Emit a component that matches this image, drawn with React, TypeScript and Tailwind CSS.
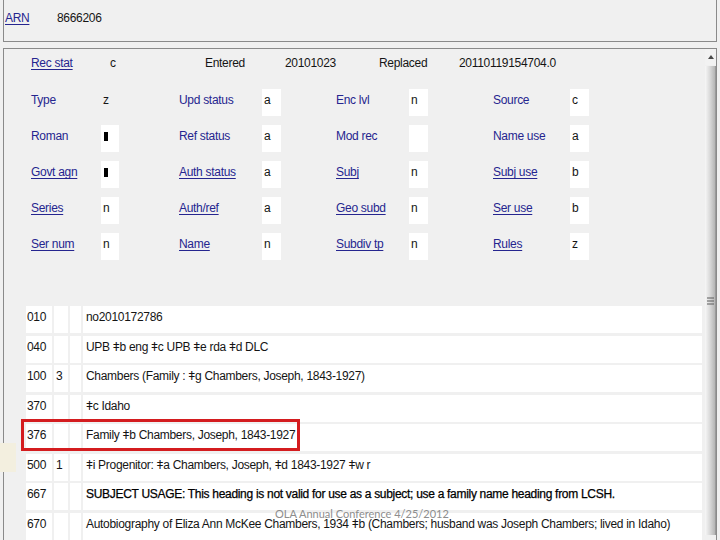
type Field = { label: string; value: string; link?: boolean; box?: boolean; fill?: boolean };

const cols = [
  { wrap: '', label: 'w-[70px]', box: 'w-[18px]' },
  { wrap: 'ml-[60px]', label: 'w-[83px]', box: 'w-[19px]' },
  { wrap: 'ml-[55px]', label: 'w-[73px]', box: 'w-[19px]' },
  { wrap: 'ml-[65px]', label: 'w-[77px]', box: 'w-[19px]' },
];

const fixedRows: Field[][] = [
  [
    { label: 'Type', value: 'z', box: false },
    { label: 'Upd status', value: 'a' },
    { label: 'Enc lvl', value: 'n' },
    { label: 'Source', value: 'c' },
  ],
  [
    { label: 'Roman', value: '', fill: true },
    { label: 'Ref status', value: 'a' },
    { label: 'Mod rec', value: '' },
    { label: 'Name use', value: 'a' },
  ],
  [
    { label: 'Govt agn', value: '', fill: true, link: true },
    { label: 'Auth status', value: 'a', link: true },
    { label: 'Subj', value: 'n', link: true },
    { label: 'Subj use', value: 'b', link: true },
  ],
  [
    { label: 'Series', value: 'n', link: true },
    { label: 'Auth/ref', value: 'a', link: true },
    { label: 'Geo subd', value: 'n', link: true },
    { label: 'Ser use', value: 'b', link: true },
  ],
  [
    { label: 'Ser num', value: 'n', link: true },
    { label: 'Name', value: 'n', link: true },
    { label: 'Subdiv tp', value: 'n', link: true },
    { label: 'Rules', value: 'z', link: true },
  ],
];

const varFields = [
  { tag: '010', i1: '', data: 'no2010172786' },
  { tag: '040', i1: '', data: 'UPB ǂb eng ǂc UPB ǂe rda ǂd DLC' },
  { tag: '100', i1: '3', data: 'Chambers (Family : ǂg Chambers, Joseph, 1843-1927)' },
  { tag: '370', i1: '', data: 'ǂc Idaho' },
  { tag: '376', i1: '', data: 'Family ǂb Chambers, Joseph, 1843-1927', marked: true },
  { tag: '500', i1: '1', data: 'ǂi Progenitor: ǂa Chambers, Joseph, ǂd 1843-1927 ǂw r' },
  { tag: '667', i1: '', data: 'SUBJECT USAGE: This heading is not valid for use as a subject; use a family name heading from LCSH.', dark: true },
  { tag: '670', i1: '', data: 'Autobiography of Eliza Ann McKee Chambers, 1934 ǂb (Chambers; husband was Joseph Chambers; lived in Idaho)' },
];

function Label({ text, link }: { text: string; link?: boolean }) {
  return <span className={`text-[#25258f] ${link ? 'underline underline-offset-2' : ''}`}>{text}</span>;
}

export default function App() {
  return (
    <div
      className="relative w-[720px] h-[540px] overflow-hidden bg-[#f0f0f0] text-[12px] leading-[15px] tracking-[-0.3px] text-[#151515]"
      style={{ fontFamily: '"Liberation Sans", Arial, sans-serif' }}
    >
      {/* ARN header */}
      <div className="ml-[3px] w-[714px] h-[42px] border-l border-r border-b border-[#8a8a8a] pl-[1px] pt-[11px] flex">
        <span className="w-[52px]">
          <Label text="ARN" link />
        </span>
        <span>8666206</span>
      </div>

      {/* record panel */}
      <div className="mt-[6px] ml-[3px] w-[714px] h-[492px] border-t border-l border-r border-[#8a8a8a] flex">
        <div className="flex-1 min-w-0 flex flex-col">
          {/* fixed fields */}
          <div className="pl-[27px] pt-[3px] flex flex-col">
            <div className="h-[27px] pt-[4px] flex">
              <span className="w-[79px]">
                <Label text="Rec stat" link />
              </span>
              <span className="w-[95px]">c</span>
              <span className="w-[80px]">Entered</span>
              <span className="w-[94px]">20101023</span>
              <span className="w-[80px]">Replaced</span>
              <span>20110119154704.0</span>
            </div>
            <div className="mt-[10px] flex flex-col gap-[9px]">
              {fixedRows.map((row, r) => (
                <div key={r} className="h-[27px] flex">
                  {row.map((f, c) => (
                    <div key={c} className={`flex ${cols[c].wrap}`}>
                      <div className={`${cols[c].label} pt-[4px]`}>
                        <Label text={f.label} link={f.link} />
                      </div>
                      <div className={`${cols[c].box} h-[27px] pl-[2px] pt-[4px] ${f.box === false ? '' : 'bg-white'}`}>
                        {f.fill ? <span className="inline-block ml-[1px] mt-[3px] w-[4px] h-[9px] bg-black" /> : f.value}
                      </div>
                    </div>
                  ))}
                </div>
              ))}
            </div>
          </div>

          {/* variable fields */}
          <div className="mt-[46px] ml-[22px] mr-[3px] flex flex-col gap-[2.5px]">
            {varFields.map((v) => (
              <div key={v.tag} className="relative h-[27px] flex gap-[2px]">
                <div className="w-[26px] bg-white pl-[1px] pt-[4px]">{v.tag}</div>
                <div className="w-[14px] bg-white pl-[2px] pt-[4px]">{v.i1}</div>
                <div className="w-[11px] bg-white" />
                <div className={`flex-1 min-w-0 overflow-hidden bg-white pl-[3px] pt-[4px] whitespace-nowrap ${v.dark ? 'text-black [-webkit-text-stroke:0.25px_black]' : ''}`}>
                  {v.data}
                </div>
                {v.marked && (
                  <div className="absolute -top-[5px] -left-[5px] w-[279px] h-[32px] border-[3px] border-[#d41c1f]" />
                )}
              </div>
            ))}
          </div>
        </div>

        {/* scrollbar */}
        <div className="w-[11px] shrink-0 flex flex-col">
          <div className="h-[16px] bg-[#f2f2f2] flex items-center justify-center">
            <svg width="6" height="4" viewBox="0 0 6 4">
              <path d="M0 4 L3 0 L6 4 Z" fill="#4a4a4a" />
            </svg>
          </div>
          <div className="flex-1 mt-[1px] mb-[5px] bg-gradient-to-r from-[#f7f7f7] via-[#d9d9d9] to-[#b5b5b5] border-r border-[#9a9a9a] flex items-center justify-center">
            <svg width="7" height="8" viewBox="0 0 7 8">
              <path d="M0 1 H7 M0 4 H7 M0 7 H7" stroke="#5a5a5a" strokeWidth="1" />
            </svg>
          </div>
        </div>
      </div>

      {/* stray highlight at left edge */}
      <div className="absolute left-0 top-[443px] w-[16px] h-[29px] bg-[#f3efdf]" />

      {/* slide footer */}
      <div
        className="absolute left-[275px] top-[507px] text-[11px] leading-[14px] tracking-normal text-[#8d8d8d]"
        style={{ fontFamily: 'Lato, "Open Sans", sans-serif' }}
      >
        OLA Annual Conference 4/25/2012
      </div>
    </div>
  );
}
